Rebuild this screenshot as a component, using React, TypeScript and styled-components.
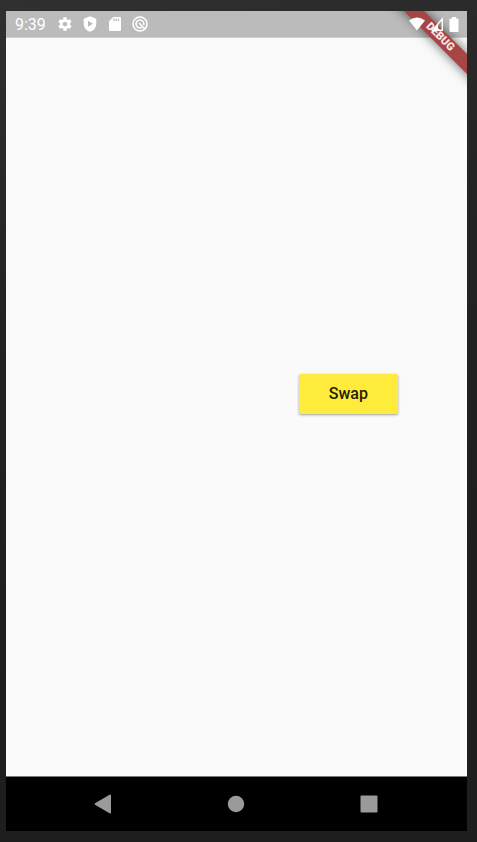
import React from "react";
import styled, { createGlobalStyle } from "styled-components";

const GlobalStyle = createGlobalStyle`
  * { box-sizing: border-box; }
  body { margin: 0; background: #1e1e1e; font-family: Roboto, sans-serif; }
  button { font: inherit; border: 0; padding: 0; }
`;

const Desktop = styled.div`
  display: flex;
  min-height: 100vh;
  padding: 11px 10px 11px 6px;
  background: linear-gradient(165deg, #303030 0%, #242424 30%, #1e1e1e 70%);
`;

const Device = styled.div`
  position: relative;
  flex: 1;
  display: flex;
  flex-direction: column;
  overflow: hidden;
  background: #fafafa;
`;

const StatusBar = styled.header`
  display: flex;
  align-items: center;
  justify-content: space-between;
  height: 27px;
  padding: 0 8px 0 9px;
  background: #bbbbbb;
  border-bottom: 1px solid #cfcfcf;
  color: #ffffff;
`;

const StatusGroup = styled.div<{ $gap: number }>`
  position: relative;
  z-index: 2;
  display: flex;
  align-items: center;
  gap: ${({ $gap }) => $gap}px;
`;

const Clock = styled.time`
  margin-right: 2px;
  padding-top: 1px;
  font-size: 16px;
  line-height: 25px;
`;

const StatusIcon = styled.svg`
  display: block;
  fill: currentColor;
`;

const BannerCorner = styled.div`
  position: absolute;
  z-index: 1;
  top: 0;
  right: 0;
  width: 84px;
  height: 84px;
  overflow: hidden;
  pointer-events: none;
`;

const Banner = styled.div`
  position: absolute;
  top: 19px;
  right: -33px;
  width: 120px;
  height: 14px;
  transform: rotate(45deg);
  background: #a74444;
  box-shadow: 0 0 12px rgba(0, 0, 0, 0.6);
  color: #f4eaea;
  font-size: 11px;
  font-weight: 900;
  line-height: 14px;
  text-align: center;
`;

const Content = styled.main`
  flex: 1;
  display: flex;
  align-items: center;
  justify-content: flex-end;
  padding: 0 15% 27px 0;
`;

const SwapButton = styled.button`
  min-width: 99px;
  height: 40px;
  border-radius: 2px;
  background: #ffeb3b;
  box-shadow: 0 1px 3px rgba(0, 0, 0, 0.28), 0 1px 2px rgba(0, 0, 0, 0.1);
  color: #212108;
  font-size: 16px;
  font-weight: 500;
  cursor: pointer;
`;

const NavBar = styled.nav`
  display: grid;
  grid-template-columns: repeat(3, 1fr);
  height: 55px;
  padding: 0 32px 0 30px;
  border-top: 1px solid #777777;
  background: #000000;
`;

const NavButton = styled.button`
  display: flex;
  align-items: center;
  justify-content: center;
  background: transparent;
  color: #9a9a9a;
  cursor: pointer;
`;

export default function App() {
  return (
    <>
      <GlobalStyle />
      <Desktop>
        <Device>
          <StatusBar>
            <StatusGroup $gap={9}>
              <Clock>9:39</Clock>
              <StatusIcon width="16" height="16" viewBox="0 0 24 24" aria-hidden="true">
                <path d="M19.43 12.98c.04-.32.07-.64.07-.98s-.03-.66-.07-.98l2.11-1.65c.19-.15.24-.42.12-.64l-2-3.46c-.12-.22-.39-.3-.61-.22l-2.49 1c-.52-.4-1.08-.73-1.69-.98l-.38-2.65A.49.49 0 0 0 14 2h-4c-.25 0-.46.18-.49.42l-.38 2.65c-.61.25-1.17.59-1.69.98l-2.49-1c-.23-.09-.49 0-.61.22l-2 3.46c-.13.22-.07.49.12.64l2.11 1.65c-.04.32-.07.65-.07.98s.03.66.07.98l-2.11 1.65c-.19.15-.24.42-.12.64l2 3.46c.12.22.39.3.61.22l2.49-1c.52.4 1.08.73 1.69.98l.38 2.65c.03.24.24.42.49.42h4c.25 0 .46-.18.49-.42l.38-2.65c.61-.25 1.17-.59 1.69-.98l2.49 1c.23.09.49 0 .61-.22l2-3.46c.12-.22.07-.49-.12-.64l-2.11-1.65zM12 15.5c-1.93 0-3.5-1.57-3.5-3.5s1.57-3.5 3.5-3.5 3.5 1.57 3.5 3.5-1.57 3.5-3.5 3.5z" />
              </StatusIcon>
              <StatusIcon width="16" height="16" viewBox="0 0 16 16" aria-hidden="true">
                <path fillRule="evenodd" d="M8 .3 14.3 2.700V7.500C14.300 11.500 12 14.500 8 15.800 4 14.500 1.700 11.500 1.700 7.500V2.700ZM6 4.800V10.800L11 7.800Z" />
              </StatusIcon>
              <StatusIcon width="16" height="16" viewBox="0 0 16 16" aria-hidden="true">
                <path d="M6.200 1H12.700Q14 1 14 2.300V13.700Q14 15 12.700 15H3.300Q2 15 2 13.700V5.200Z" />
                <path d="M6.200 2.500H7.500V5H6.200ZM8.500 2.500H9.800V5H8.500ZM10.800 2.500H12.100V5H10.800Z" fill="#bbbbbb" />
              </StatusIcon>
              <StatusIcon width="16" height="16" viewBox="0 0 16 16" aria-hidden="true">
                <circle cx="8" cy="8" r="7" fill="none" stroke="currentColor" strokeWidth="1.500" />
                <path d="M9.800 11.400A3.900 3.900 0 1 1 11.700 9M7 7 12.700 12.700" fill="none" stroke="currentColor" strokeWidth="1.600" />
              </StatusIcon>
            </StatusGroup>
            <StatusGroup $gap={6}>
              <StatusIcon width="16" height="14" viewBox="0 0 16 14" aria-hidden="true">
                <path d="M0 3.500Q8-2.500 16 3.500L8 13.500Z" />
              </StatusIcon>
              <StatusIcon width="12" height="14" viewBox="0 0 12 14" aria-hidden="true">
                <path fillRule="evenodd" d="M12 0V14H0ZM10.600 3.700 7.200 7.700V12.600H10.600Z" />
              </StatusIcon>
              <StatusIcon width="10" height="15" viewBox="0 0 10 15" aria-hidden="true">
                <path d="M3 0H7V1.500H8.500Q9.500 1.500 9.500 2.500V14Q9.500 15 8.500 15H1.500Q.5 15 .5 14V2.500Q.5 1.500 1.500 1.500H3Z" />
              </StatusIcon>
            </StatusGroup>
          </StatusBar>
          <BannerCorner>
            <Banner>DEBUG</Banner>
          </BannerCorner>
          <Content>
            <SwapButton type="button">Swap</SwapButton>
          </Content>
          <NavBar aria-label="System navigation">
            <NavButton type="button" aria-label="Back">
              <StatusIcon width="18" height="20" viewBox="0 0 18 20" aria-hidden="true">
                <path d="M1 9.200 15.500.800Q17 0 17 1.500V18.500Q17 20 15.500 19.200L1 10.800Q0 10 1 9.200Z" />
              </StatusIcon>
            </NavButton>
            <NavButton type="button" aria-label="Home">
              <StatusIcon width="18" height="18" viewBox="0 0 18 18" aria-hidden="true">
                <circle cx="9" cy="9" r="8.200" />
              </StatusIcon>
            </NavButton>
            <NavButton type="button" aria-label="Recent apps">
              <StatusIcon width="18" height="18" viewBox="0 0 18 18" aria-hidden="true">
                <rect x=".5" y=".5" width="17" height="17" rx="1" />
              </StatusIcon>
            </NavButton>
          </NavBar>
        </Device>
      </Desktop>
    </>
  );
}
